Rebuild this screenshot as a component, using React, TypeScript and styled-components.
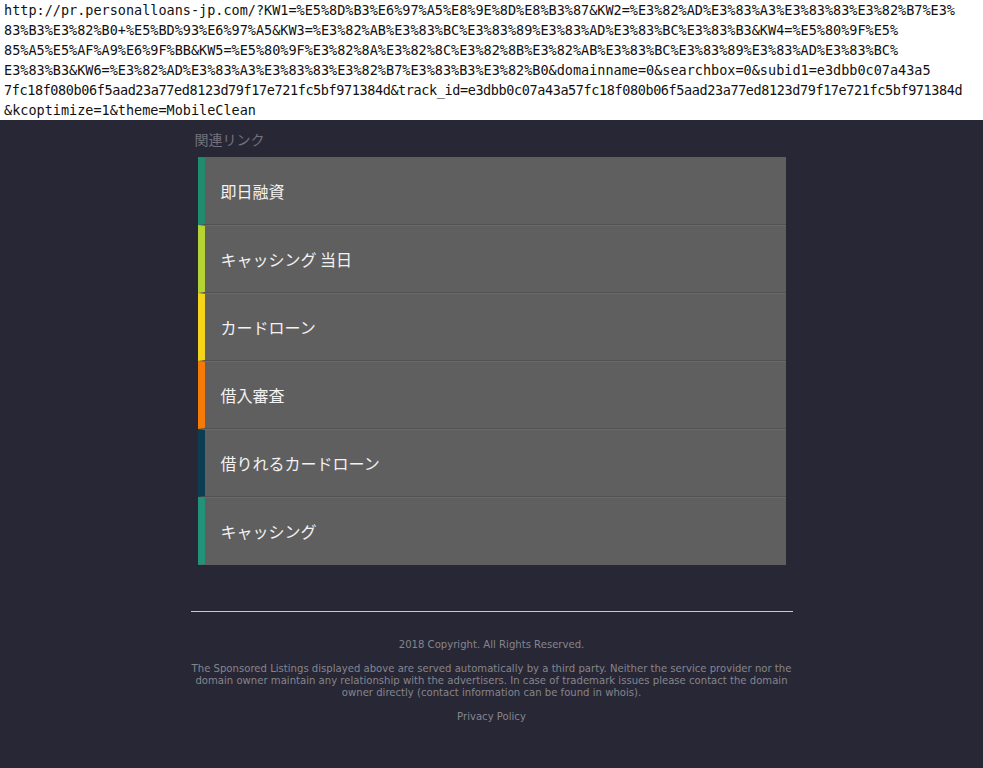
import styled, { createGlobalStyle } from 'styled-components';

const GlobalStyle = createGlobalStyle`
    html, body {
        margin: 0;
        padding: 0;
        background: #282736;
    }
    body {
        font-family: "Liberation Sans", Arial, sans-serif;
    }
`;

const UrlBox = styled.div`
    background: #ffffff;
    color: #111111;
    font-family: "DejaVu Sans Mono", monospace;
    font-size: 13.5px;
    line-height: 20px;
    padding-left: 4px;
    overflow: hidden;
`;

const UrlLine = styled.div<{ $tight?: boolean }>`
    white-space: nowrap;
    letter-spacing: ${p => (p.$tight ? '-0.4px' : '0')};
`;

const Page = styled.div`
    width: 602px;
    margin: 0 auto;
    padding-top: 10px;
    padding-bottom: 40px;
`;

const Heading = styled.div`
    font-family: "Noto Sans CJK JP", sans-serif;
    font-size: 14px;
    line-height: 18px;
    color: #72717c;
    padding-left: 4px;
    margin-bottom: 9px;
`;

const LinkList = styled.ul`
    list-style: none;
    margin: 0 7px;
    padding: 0;
`;

const LinkItem = styled.li<{ $accent: string }>`
    display: flex;
    align-items: center;
    height: 66px;
    background: #5f5f5f;
    border-left: 7px solid ${p => p.$accent};
    border-top: 1px solid #6a6a6a;
    border-bottom: 1px solid #515151;
    padding-left: 16px;
    font-family: "Noto Sans CJK JP", sans-serif;
    font-size: 16px;
    color: #f2f2f2;
    &:first-child {
        border-top-color: #5f5f5f;
    }
    &:last-child {
        border-bottom-color: #5f5f5f;
    }
`;

const Footer = styled.footer`
    margin-top: 46px;
    border-top: 1px solid #c9c8d2;
    padding-top: 27px;
    text-align: center;
    font-family: "DejaVu Sans", Verdana, sans-serif;
    font-size: 10.1px;
    line-height: 12px;
    color: #85858c;
`;

const FooterText = styled.p`
    margin: 0 0 12px;
`;

const urlLines = [
    'http://pr.personalloans-jp.com/?KW1=%E5%8D%B3%E6%97%A5%E8%9E%8D%E8%B3%87&KW2=%E3%82%AD%E3%83%A3%E3%83%83%E3%82%B7%E3%',
    '83%B3%E3%82%B0+%E5%BD%93%E6%97%A5&KW3=%E3%82%AB%E3%83%BC%E3%83%89%E3%83%AD%E3%83%BC%E3%83%B3&KW4=%E5%80%9F%E5%',
    '85%A5%E5%AF%A9%E6%9F%BB&KW5=%E5%80%9F%E3%82%8A%E3%82%8C%E3%82%8B%E3%82%AB%E3%83%BC%E3%83%89%E3%83%AD%E3%83%BC%',
    'E3%83%B3&KW6=%E3%82%AD%E3%83%A3%E3%83%83%E3%82%B7%E3%83%B3%E3%82%B0&domainname=0&searchbox=0&subid1=e3dbb0c07a43a5',
    '7fc18f080b06f5aad23a77ed8123d79f17e721fc5bf971384d&track_id=e3dbb0c07a43a57fc18f080b06f5aad23a77ed8123d79f17e721fc5bf971384d',
    '&kcoptimize=1&theme=MobileClean',
];

const links = [
    { label: '即日融資', accent: '#1f8c6d' },
    { label: 'キャッシング 当日', accent: '#b6d335' },
    { label: 'カードローン', accent: '#f6d419' },
    { label: '借入審査', accent: '#f57b06' },
    { label: '借りれるカードローン', accent: '#0d3d50' },
    { label: 'キャッシング', accent: '#22937a' },
];

const App = () => {
    return (
        <>
            <GlobalStyle />
            <UrlBox>
                {urlLines.map((line, i) => (
                    <UrlLine key={i} $tight={line.length > 118}>{line}</UrlLine>
                ))}
            </UrlBox>
            <Page>
                <Heading>関連リンク</Heading>
                <LinkList>
                    {links.map(link => (
                        <LinkItem key={link.label} $accent={link.accent}>
                            {link.label}
                        </LinkItem>
                    ))}
                </LinkList>
                <Footer>
                    <FooterText>2018 Copyright. All Rights Reserved.</FooterText>
                    <FooterText>
                        The Sponsored Listings displayed above are served automatically by a third party. Neither the service provider nor the domain owner maintain any relationship with the advertisers. In case of trademark issues please contact the domain owner directly (contact information can be found in whois).
                    </FooterText>
                    <FooterText>Privacy Policy</FooterText>
                </Footer>
            </Page>
        </>
    );
};

export default App;
